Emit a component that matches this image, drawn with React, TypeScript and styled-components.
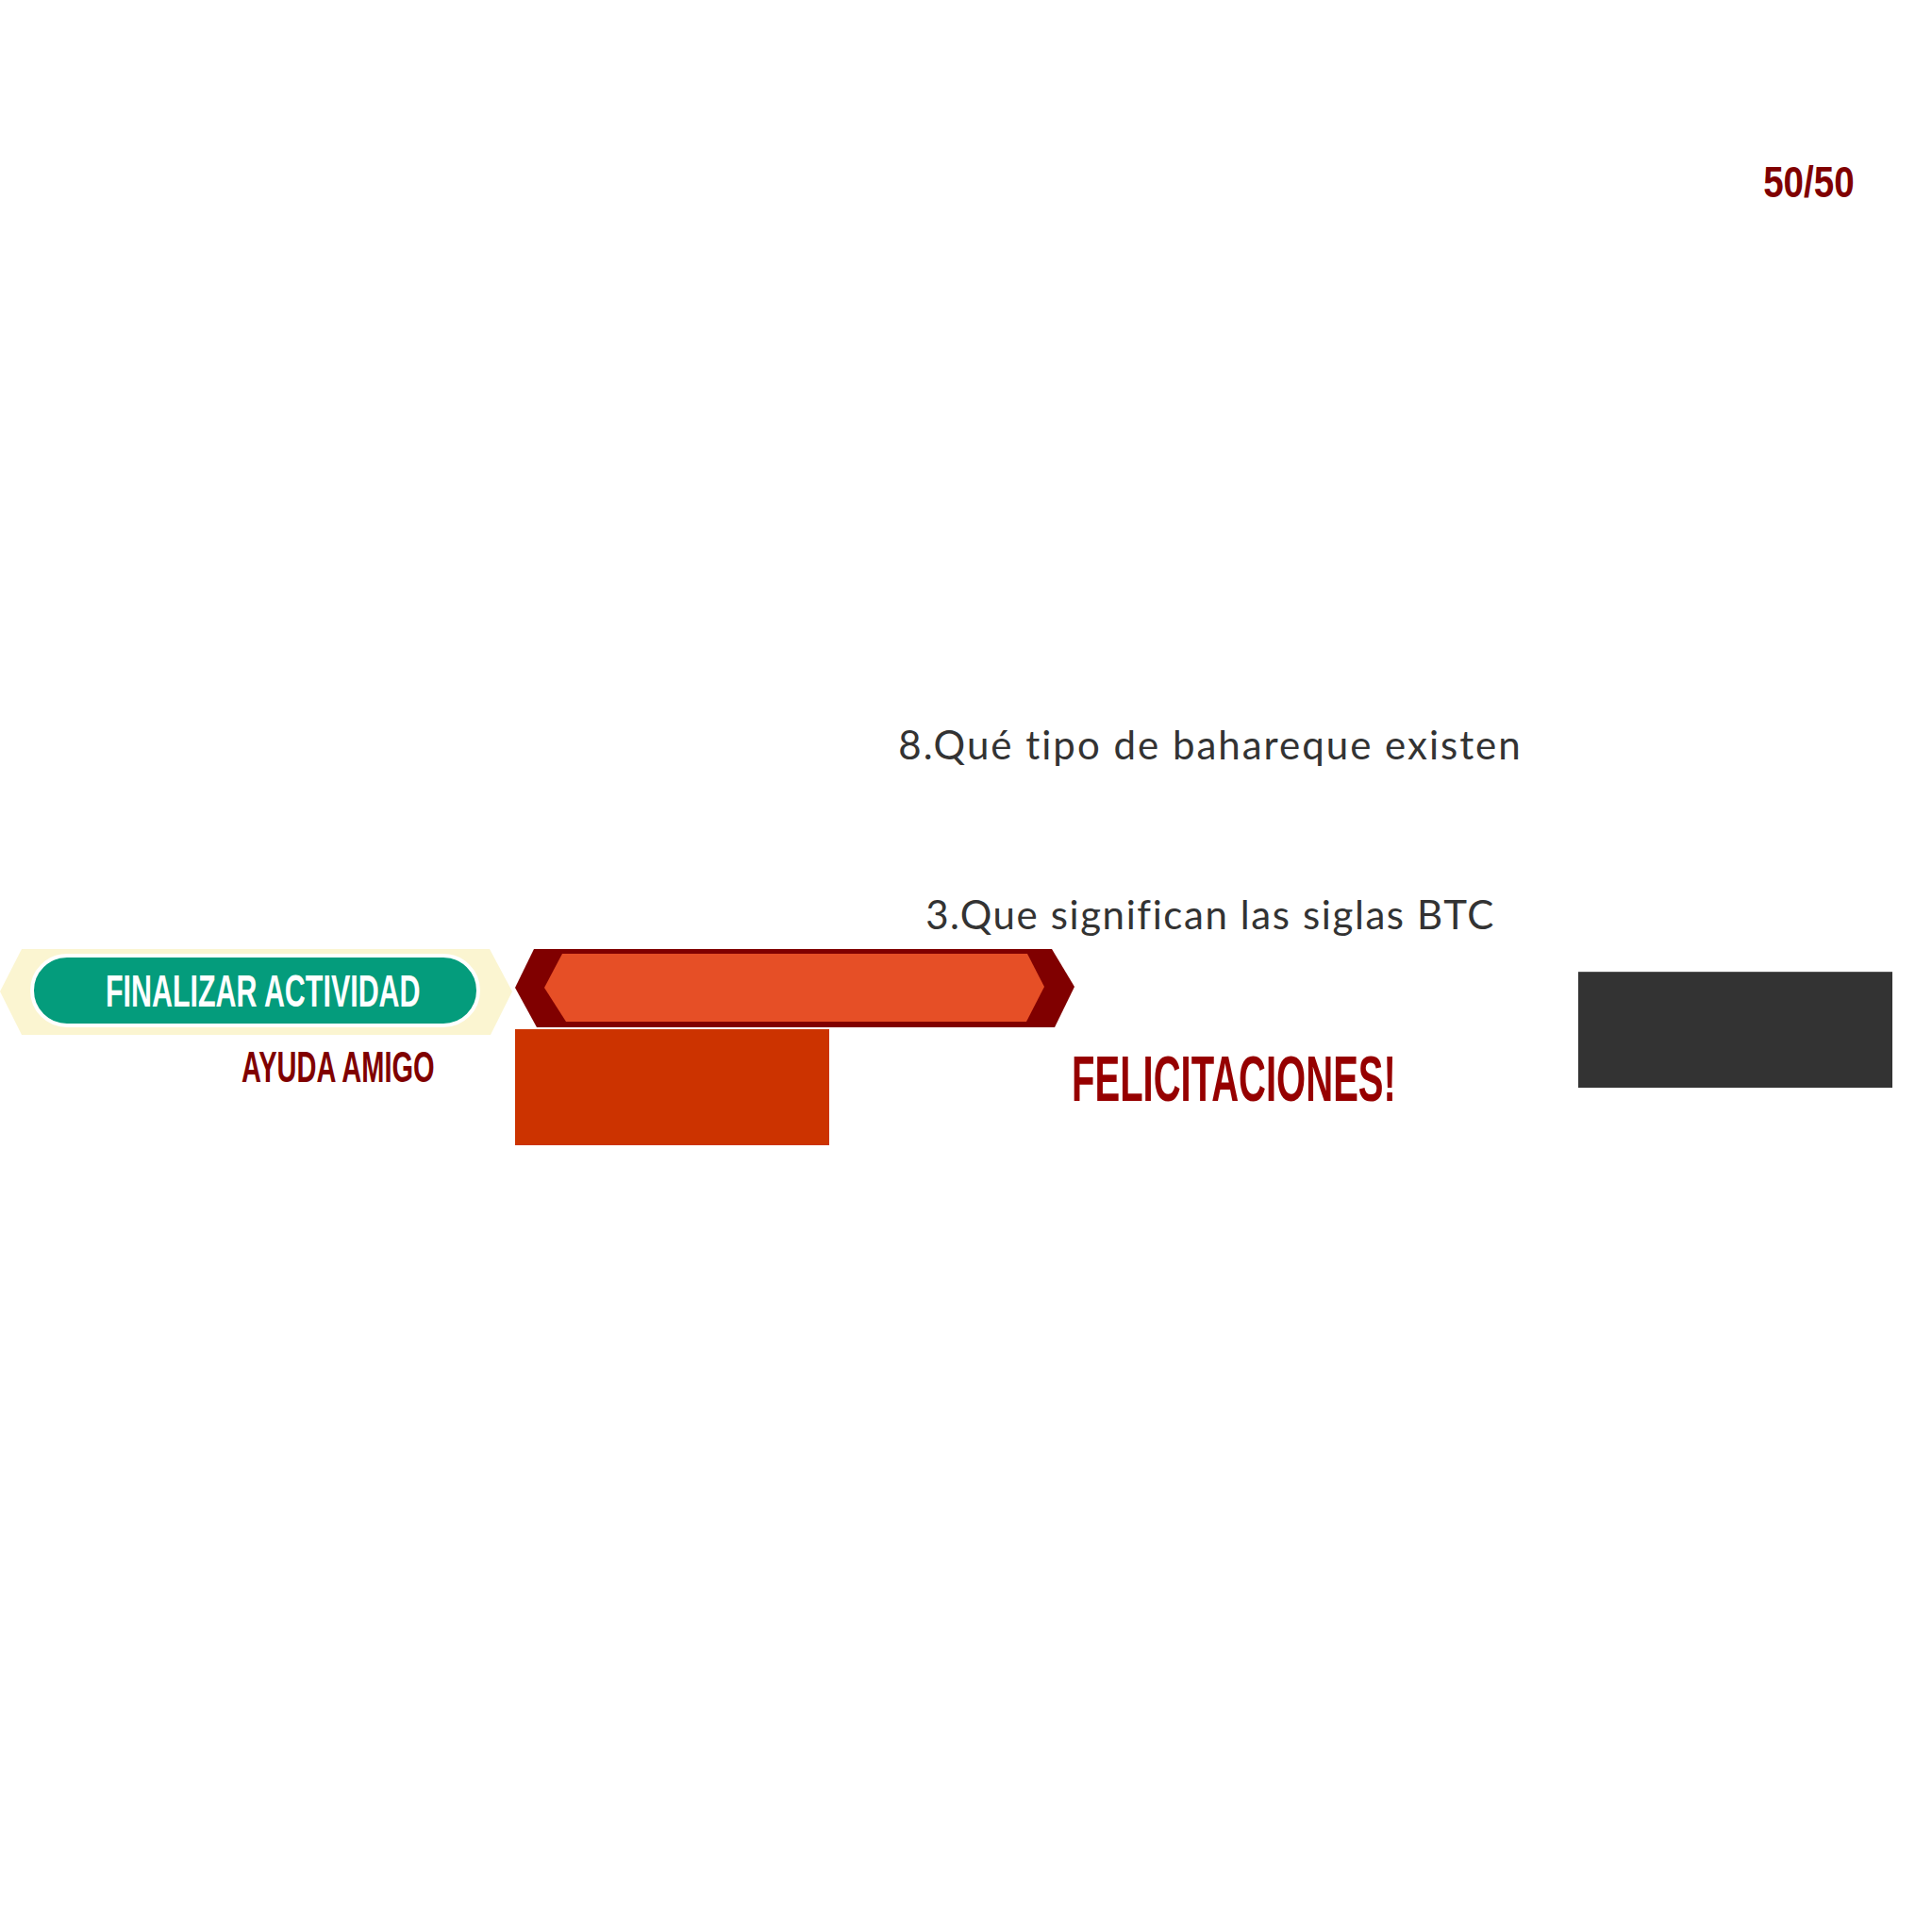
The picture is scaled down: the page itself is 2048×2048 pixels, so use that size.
import React from 'react';
import styled, { createGlobalStyle } from 'styled-components';

const GlobalStyle = createGlobalStyle`
  html, body {
    margin: 0;
    padding: 0;
    background: #ffffff;
  }
`;

const Page = styled.div`
  width: 2048px;
  height: 2048px;
  box-sizing: border-box;
  padding-top: 169px;
  display: flex;
  flex-direction: column;
  background: #ffffff;
  overflow: hidden;
`;

// condensed poster lettering (stands in for a Bebas style face)
const Display = styled.span<{ $size: number; $scale: number; $color: string; $origin?: string }>`
  display: inline-block;
  font-family: "Liberation Sans", Arial, sans-serif;
  font-weight: 700;
  font-size: ${p => p.$size}px;
  line-height: 1;
  color: ${p => p.$color};
  white-space: nowrap;
  transform: scaleX(${p => p.$scale});
  transform-origin: ${p => p.$origin ?? 'left center'};
`;

const Header = styled.header`
  display: flex;
  justify-content: flex-end;
  padding-right: 82px;
  height: 47px;
`;

const Questions = styled.section`
  margin-top: 552px;
  padding-left: 518px;
  display: flex;
  flex-direction: column;
  align-items: center;
  gap: 138px;
`;

const Question = styled.p<{ $spacing: number }>`
  margin: 0;
  font-family: Lato, "Open Sans", sans-serif;
  font-size: 42px;
  line-height: 1;
  letter-spacing: ${p => p.$spacing}px;
  color: #333333;
  white-space: nowrap;
`;

const ActionRow = styled.div`
  margin-top: 16px;
  display: flex;
  align-items: flex-start;
`;

const Column = styled.div<{ $width: number; $offset?: number }>`
  flex: 0 0 ${p => p.$width}px;
  width: ${p => p.$width}px;
  margin-left: ${p => p.$offset ?? 0}px;
  display: flex;
  flex-direction: column;
  align-items: flex-start;
`;

const FinishFrame = styled.div`
  width: 543px;
  height: 91px;
  box-sizing: border-box;
  padding: 5px 0 0 32px;
  background: #fbf5d1;
  clip-path: polygon(0 45px, 23px 0, 519px 0, 543px 45px, 520px 91px, 23px 91px);
`;

const FinishButton = styled.button`
  width: 477px;
  height: 78px;
  box-sizing: border-box;
  border: 4px solid #ffffff;
  border-radius: 39px;
  background: #049c7c;
  padding: 0 0 0 76px;
  display: flex;
  align-items: center;
  overflow: visible;
  cursor: pointer;
`;

const FriendLabel = styled.div`
  margin: 10px 0 0 256px;
`;

const Banner = styled.div`
  width: 593px;
  height: 83px;
  box-sizing: border-box;
  padding: 5px 0 0 31px;
  background: #800000;
  clip-path: polygon(0 41px, 20px 0, 569px 0, 593px 40px, 572px 83px, 23px 83px);
`;

const BannerFace = styled.div`
  width: 530px;
  height: 72px;
  background: #e64f26;
  clip-path: polygon(0 36px, 19px 0, 512px 0, 530px 35px, 511px 72px, 23px 72px);
`;

const Panel = styled.div<{ $color: string; $top: number }>`
  width: 333px;
  height: 123px;
  margin-top: ${p => p.$top}px;
  background: ${p => p.$color};
`;

const DarkPanel = styled(Panel)`
  border-top: 1px solid #565656;
  box-sizing: border-box;
`;

const Congrats = styled.div`
  margin: 103px 0 0 -3px;
`;

const App = () => {
  return (
    <>
      <GlobalStyle />
      <Page>
        <Header>
          <Display $size={47} $scale={0.82} $color="#800000" $origin="right center">50/50</Display>
        </Header>

        <Questions>
          <Question $spacing={2}>8.Qué tipo de bahareque existen</Question>
          <Question $spacing={1.6}>3.Que significan las siglas BTC</Question>
        </Questions>

        <ActionRow>
          <Column $width={543}>
            <FinishFrame>
              <FinishButton>
                <Display $size={49} $scale={0.621} $color="#ffffff">FINALIZAR ACTIVIDAD</Display>
              </FinishButton>
            </FinishFrame>
            <FriendLabel>
              <Display $size={47} $scale={0.617} $color="#800000">AYUDA AMIGO</Display>
            </FriendLabel>
          </Column>

          <Column $width={593} $offset={3}>
            <Banner>
              <BannerFace />
            </Banner>
            <Panel $color="#cc3300" $top={2} />
          </Column>

          <Column $width={534}>
            <Congrats>
              <Display $size={69} $scale={0.58} $color="#960000">FELICITACIONES!</Display>
            </Congrats>
          </Column>

          <Column $width={333}>
            <DarkPanel $color="#333333" $top={24} />
          </Column>
        </ActionRow>
      </Page>
    </>
  );
};

export default App;
